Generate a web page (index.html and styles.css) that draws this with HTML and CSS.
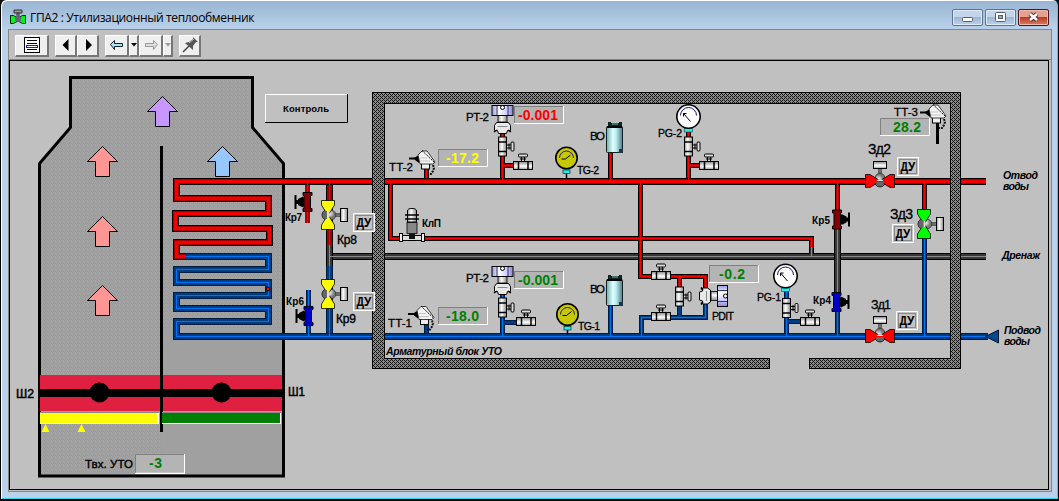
FILE: index.html
```html
<!DOCTYPE html>
<html lang="ru">
<head>
<meta charset="utf-8">
<title>ГПА2 : Утилизационный теплообменник</title>
<link rel="stylesheet" href="styles.css">
</head>
<body>
<div class="window">
  <header class="titlebar">
    <svg class="app-icon" width="16" height="16" viewBox="0 0 16 16">
      <path d="M4 1h8v3H4zM7 4h2v4H7z" fill="#999" stroke="#333"/>
      <path d="M.5 6.500h3L8 9l4.500-2.500h3v8h-3L8 12l-4.500 2.500h-3z" fill="#00f020" stroke="#030"/>
      <circle cx="8" cy="10" r="3" fill="#667"/>
    </svg>
    <span class="title">ГПА2 : Утилизационный теплообменник</span>
    <div class="controls">
      <span class="ctl"><svg width="30" height="16"><rect x="9.500" y="8.500" width="10" height="4" rx="1" fill="#fff" stroke="#55606e"/></svg></span>
      <span class="ctl"><svg width="30" height="16"><rect x="9.500" y="3.500" width="10" height="9" rx="1" fill="#fff" stroke="#55606e"/><rect x="12.500" y="6.500" width="4" height="3" fill="#9ab" stroke="#55606e"/></svg></span>
      <span class="ctl close"><svg width="30" height="16"><path d="M11 5l7 6M18 5l-7 6" stroke="#59303a" stroke-width="4.500"/><path d="M11 5l7 6M18 5l-7 6" stroke="#fff" stroke-width="2.500"/></svg></span>
    </div>
  </header>
  <div class="client">
    <nav class="toolbar">
      <span class="tool menu"><svg width="30" height="18"><rect x="7.500" y="1.500" width="15" height="15" fill="#fff" stroke="#000"/><path d="M10 4.500h10M10 7.500h10M10 13.500h10" stroke="#000"/><rect x="9.500" y="9.500" width="11" height="2" fill="#fff" stroke="#1c1ca0"/></svg></span>
      <span class="tool"><svg width="18" height="18"><path d="M11.500 3v12L5.500 9z"/></svg></span>
      <span class="tool"><svg width="18" height="18"><path d="M7 3v12l6-6z"/></svg></span>
      <span class="tool back"><svg width="20" height="18"><path d="M3.500 8.500l4-4v3h8v3h-8v3z" fill="#a5e4f4" stroke="#123"/></svg></span>
      <span class="tool drop"><svg width="6" height="18"><path d="M0 7h6L3 10.500z"/></svg></span>
      <span class="tool fwd"><svg width="20" height="18"><path d="M16.500 8.500l-4-4v3h-8v3h8v3z" fill="#ddd" stroke="#999"/></svg></span>
      <span class="tool drop last"><svg width="6" height="18"><path d="M0 7h6L3 10.500z" fill="#999"/></svg></span>
      <span class="tool"><svg width="18" height="18"><path d="M2 16l6-6" stroke="#444" stroke-width="1.500"/><path d="M4 7l4-1 4-3V1l5 5h-2l-3 4v4z" fill="#555"/><path d="M8 7l5-4" stroke="#bbb"/></svg></span>
    </nav>
    <main class="mimic">
<svg class="scheme" width="1038" height="428" viewBox="10 61 1038 428">
  <defs>
    <pattern id="wall" width="4" height="4" patternUnits="userSpaceOnUse"><rect width="4" height="4" fill="#8a8a8a"/><path d="M0 0h1v1H0zM2 0h1v1H2zM1 1h1v1H1zM0 2h1v1H0zM2 2h1v1H2zM3 3h1v1H3z" fill="#151515"/></pattern>
    <pattern id="dither" width="4" height="4" patternUnits="userSpaceOnUse"><rect width="4" height="4" fill="#a3a3a3"/><path d="M0 0h1v1H0zM2 1h1v1H2zM1 2h1v2H1zM3 3h1v1H3z" fill="#989898"/></pattern>
    <linearGradient id="metal"><stop offset="0" stop-color="#999"/><stop offset=".4" stop-color="#fff"/><stop offset="1" stop-color="#888"/></linearGradient>
    <linearGradient id="tank"><stop offset="0" stop-color="#7aa"/><stop offset=".4" stop-color="#dff"/><stop offset=".6" stop-color="#bee"/><stop offset="1" stop-color="#578"/></linearGradient>
    <linearGradient id="lilac"><stop offset="0" stop-color="#99d"/><stop offset=".35" stop-color="#fff"/><stop offset=".7" stop-color="#ccf"/><stop offset="1" stop-color="#88c"/></linearGradient>
    <radialGradient id="ball" cx=".35" cy=".35"><stop offset="0" stop-color="#fff"/><stop offset="1" stop-color="#777"/></radialGradient>

    <path id="arrow" d="M0 .5l15 15H7v15H-7v-15h-8z" stroke="#000"/>

    <g id="tap">
      <path d="M4 0h6" stroke="#000" stroke-width="4"/><path d="M4 0h6" stroke="#ccc" stroke-width="2"/>
      <path d="M6.500-3v6" stroke="#000"/>
      <rect x="8.500" y="-4.500" width="3" height="9" rx="1" fill="#ddd" stroke="#000"/>
      <rect x="-4" y="-9.500" width="8" height="19" fill="url(#metal)" stroke="#000"/>
      <path d="M-4-4.500H4M-4 5H4" stroke="#000" stroke-width="1.500"/>
    </g>

    <g id="motor">
      <path d="M5 0h8" stroke="#000" stroke-width="3"/><path d="M5 0h8" stroke="#ddd"/>
      <rect x="12.500" y="-6.500" width="7" height="13" fill="url(#metal)" stroke="#000"/>
      <path d="M0-5.500a6 5.500 0 0 0 0 11z" fill="#777" stroke="#222"/>
      <circle cx="3" cy="0" r="4.800" fill="url(#ball)" stroke="#333" stroke-width=".8"/>
      <path d="M-6.500-14.500h13v4.500L1.500-2v4l5 8v4.500h-13V10l5-8v-4l-5-8z" fill="currentColor" stroke="#000" stroke-width=".8"/>
      <path d="M-1-4a4 4 0 0 0 0 8z" fill="#666"/><path d="M0-3.500a4 4 0 0 1 0 7z" fill="#ddd"/>
    </g>

    <g id="hand">
      <path d="M-11.500-7v14" stroke="#000" stroke-width="2"/>
      <path d="M-11 0h6" stroke="#000" stroke-width="4"/><path d="M-9-3l5-2.500v11l-5-2.500z"/>
      <path d="M-4-9.500h9v3H3.500v13H5v3h-9v-3h1v-13h-1z" fill="currentColor" stroke="#000"/>
      <path d="M-4-4.500v9" stroke="#000" stroke-width="2"/>
    </g>

    <g id="pt">
      <rect x="-4.500" y="10" width="9" height="7" fill="url(#metal)" stroke="#222"/>
      <path d="M-6 17.500H6l2 3v5H5l-1 3h-8l-1-3h-3v-5z" fill="#e8e8e8" stroke="#000"/>
      <path d="M-5 21.500H5" stroke="#888"/><path d="M-8.500 27l3-2M8.500 27l-3-2" stroke="#000" stroke-width="1.500"/>
      <rect x="-10.500" y=".5" width="21" height="10" fill="url(#lilac)" stroke="#000"/>
      <path d="M-5.500 1v9M5.500 1v9" stroke="#336"/><circle cx="0" cy="2.500" r="2" fill="#fff" stroke="#000"/>
    </g>

    <g id="tt">
      <path d="M0 8.500h9" stroke="#000" stroke-width="2"/><path d="M5 8l5-3v8l-4-3z"/>
      <path d="M24 15l1 3-1 3-2 3h-3" fill="none" stroke="#111" stroke-width="2" stroke-dasharray="2 1"/>
      <rect x="12.500" y="13" width="8" height="6" fill="#eee" stroke="#000"/>
      <path d="M9 5l4-4h5l8 11-2 2H11z" fill="#f4f4f4" stroke="#111" stroke-width=".8"/>
      <path d="M13 .5l13 12.500" stroke="#000" stroke-width="1" stroke-dasharray="2 1"/>
      <path d="M11 8h7M11 11h10" stroke="#bbb" stroke-width=".8"/>
    </g>

    <g id="pg">
      <rect x="-4" y="12" width="8" height="3.500" fill="#2ee" stroke="#055" stroke-width=".6"/>
      <circle r="11.700" fill="#fff" stroke="#000" stroke-width="1.600"/>
      <path d="M-8-1a8 8 0 0 1 16 0" fill="none" stroke="#118"/><path d="M2 5l-7-8M-5-3v3M-5-3h3" stroke="#000" fill="none"/>
    </g>
    <g id="tg">
      <path d="M0 13v7" stroke="#000" stroke-width="1.500"/>
      <rect x="-3.500" y="12" width="7" height="3.500" fill="#2ee" stroke="#033" stroke-width=".7"/>
      <circle r="10.700" fill="#c8c800" stroke="#000" stroke-width="1.600"/>
      <path d="M-7 0a7 7 0 0 1 14 0" fill="none" stroke="#226"/><path d="M-5 1h4l5-4" stroke="#000" fill="none"/>
    </g>
    <g id="bo">
      <path d="M2 4V0h3v1h8V0h3v4z" fill="#122"/><path d="M6 2h6" stroke="#7bb"/>
      <rect x=".5" y="4.500" width="16" height="26" rx="1" fill="url(#tank)" stroke="#122"/>
      <path d="M1 5h15" stroke="#000" stroke-width="2"/><rect x="13" y="27" width="4" height="4" fill="#234"/>
    </g>
    <g id="du">
      <rect width="22" height="19" fill="#c4c4c4"/><path d="M.5 19V.5H22" fill="none" stroke="#fff"/><path d="M0 18.500h21.500V0" fill="none" stroke="#fff"/>
      <rect x="2.500" y="2.500" width="17" height="14" fill="none" stroke="#888"/>
      <text x="3.500" y="14" class="du" textLength="15" lengthAdjust="spacingAndGlyphs">ДУ</text>
    </g>
    <g id="box"><rect width="50" height="18" fill="#b4b4b4"/><path d="M.5 18V.5H50" fill="none" stroke="#808080"/><path d="M0 17.500h49.500V0" fill="none" stroke="#fff"/></g>
  </defs>

  <!-- exhaust duct -->
  <path d="M70.500 77.500h182v50l31 36v312.500h-244V163.500l31-36z" fill="url(#dither)" stroke="#000" stroke-width="3"/>
  <path d="M163 330h119v144H163z" fill="#a0a0a0"/>
  <path d="M40 375h120v36H40zM162 375h120v36H162z" fill="#e02040"/>
  <path d="M38 389h246v8H38z"/>
  <path d="M161.500 146v286" stroke="#000" stroke-width="3"/>
  <circle cx="99.500" cy="392.500" r="10"/><circle cx="221.500" cy="392.500" r="10"/>
  <path d="M40 412h119v12H40zM162 412h119v12H162z" fill="#fff"/>
  <path d="M40 412h119v1H40zM162 412h119v1H162z" fill="#888"/>
  <path d="M40 413h117v10H40z" fill="#ff0"/><path d="M162 413h118v10H162z" fill="#008000"/>
  <path d="M45.500 424l4 8h-8zM81.500 424l4 8h-8z" fill="#ff0"/>
  <use href="#arrow" x="162.500" y="96" fill="#c896ff"/>
  <use href="#arrow" x="102.500" y="146" fill="#ff9696"/>
  <use href="#arrow" x="102.500" y="216" fill="#ff9696"/>
  <use href="#arrow" x="102.500" y="285" fill="#ff9696"/>
  <use href="#arrow" x="222.500" y="146" fill="#96c8ff"/>

  <g class="pipes">
    <!-- drain -->
    <g class="gray"><path class="o7" d="M329.500 256.500H986"/><path class="m5" d="M329.500 256.500H986"/><path class="c1" d="M329.500 256.500H986"/></g>
    <!-- thin branches, supply side -->
    <g class="red">
      <path class="o5" d="M390.500 184v54.500h421v9M640.500 184v92.500h65v11M679.500 277v10M502.500 132v48M502.500 165.500h12M688.500 130v50M688.500 165.500h12M610.500 152v28M426.500 169v11M837.500 184v28M924.500 184v27"/>
      <path class="m3" d="M390.500 182v56.500h421v9M640.500 182v94.500h65v11M679.500 277v10M502.500 132v48M502.500 165.500h12M688.500 130v50M688.500 165.500h12M610.500 152v28M426.500 169v11M837.500 184v28M924.500 184v27"/>
      <path class="c1" d="M390.500 182v56.500h421v9M640.500 182v94.500h65v11M679.500 277v10M502.500 132v48M502.500 165.500h12M688.500 130v50M688.500 165.500h12M610.500 152v28M426.500 169v11M837.500 184v28M924.500 184v27"/>
      <path class="b4" d="M307.500 185v38"/><path class="c1" d="M307.500 185v38"/>
    </g>
    <g class="gray"><path class="o5" d="M811.500 247v7"/><path class="m3" d="M811.500 247v9"/><path class="c1" d="M811.500 247v9"/></g>
    <!-- thin branches, return side -->
    <g class="blue">
      <path class="o5" d="M705.500 302v15.500h-64V334M679.500 305v12M502.500 292v44M502.500 322h15M786.500 290v46M786.500 321.500h15M610.500 306v28M426 325v9M837.500 311v23M924.500 238v98M308.500 290v44"/>
      <path class="m3" d="M705.500 302v15.500h-64V334M679.500 305v12M502.500 292v44M502.500 322h15M786.500 290v46M786.500 321.500h15M610.500 306v28M426 325v9M837.500 311v23M924.500 238v98M308.500 290v44"/>
      <path class="c1" d="M705.500 302v15.500h-64V334M502.500 292v44M786.500 290v46M610.500 306v28M837.500 311v23M924.500 238v98M308.500 290v44"/>
    </g>
    <g class="gray"><path class="o7" d="M837.500 228v66"/><path class="m5" d="M837.500 228v66"/><path class="c1" d="M837.500 228v66"/></g>
    <!-- column of valves Кр8 / Кр9 -->
    <g class="red"><path class="o7" d="M329.500 184v61"/><path class="m5" d="M329.500 184v61"/><path class="c1" d="M329.500 184v61"/></g>
    <g class="gray"><path class="o7" d="M329.500 245v21"/><path class="m5" d="M329.500 245v21"/><path class="c1" d="M329.500 245v21M329.500 256.500h6"/></g>
    <g class="blue"><path class="o7" d="M329.500 266v68"/><path class="m5" d="M329.500 266v68"/><path class="c1" d="M329.500 266v68"/></g>
    <!-- mains and coil -->
    <g class="blue">
      <path class="o7" d="M184 256.500h84.500v13h-92v13h92v13h-92v13h92v13h-92v15H988"/>
      <path class="m5" d="M184 256.500h84.500v13h-92v13h92v13h-92v13h92v13h-92v15H988"/>
      <path class="c1" d="M184 256.500h84.500v13h-92v13h92v13h-92v13h92v13h-92v15H988"/>
      <path class="c1" d="M329.500 332v4M308.500 332v4M502.500 332v4M610.500 332v4M641.500 332v4M786.500 332v4M837.500 332v4M924.500 332v4"/>
    </g>
    <g class="red">
      <path class="o7" d="M986 181.500H176.500v17h92v15h-93v15h94v14h-93v14H186"/>
      <path class="m5" d="M986 181.500H176.500v17h92v15h-93v15h94v14h-93v14H186"/>
      <path class="c2" d="M986 181.500H176.500v17h92v15h-93v15h94v14h-93v14H186"/>
      <path class="c1" d="M329.500 181v6M307.500 181v6M390.500 181v6M502.500 176v6M610.500 176v6M640.500 181v6M688.500 176v6M837.500 181v6M924.500 181v6"/>
    </g>
  </g>
  <circle cx="268" cy="289" r="1.800" fill="#f00" stroke="#300"/>
  <path d="M985.500 336.500l13-6.500v13z" fill="#004890" stroke="#012"/>

  <!-- valve block wall -->
  <path class="crisp" d="M372.500 92.500h588v276h-151v-10h140.500v-255.500h-566v255.500h385v10h-396.500z" fill="url(#wall)" stroke="#000"/>

  <use href="#tap" x="502.500" y="146.500"/><use href="#tap" x="688.500" y="146.500"/><use href="#tap" x="502.500" y="307.500"/>
  <use href="#tap" x="679.500" y="296.500"/><use href="#tap" x="786.500" y="308"/>
  <use href="#tap" transform="translate(523 165.500) rotate(-90)"/><use href="#tap" transform="translate(709 165.500) rotate(-90)"/>
  <use href="#tap" transform="translate(526 321.500) rotate(-90)"/><use href="#tap" transform="translate(661 275.500) rotate(-90)"/>
  <use href="#tap" transform="translate(661 316.500) rotate(-90)"/><use href="#tap" transform="translate(810 321.500) rotate(-90)"/>

  <g color="#ff0"><use href="#motor" x="328" y="215"/><use href="#motor" x="328" y="294"/></g>
  <g color="#0f0"><use href="#motor" x="924" y="224"/></g>
  <g color="#f00"><use href="#motor" transform="translate(880 181) rotate(-90)"/><use href="#motor" transform="translate(880 336) rotate(-90)"/></g>

  <g color="#800"><use href="#hand" x="307" y="202"/><use href="#hand" transform="translate(837.500 219.500) scale(-1 1)"/></g>
  <g color="#00c"><use href="#hand" x="308" y="316"/><use href="#hand" transform="translate(837 302) scale(-1 1)"/></g>

  <use href="#pt" x="502.500" y="105"/><use href="#pt" x="502.500" y="266"/><use href="#pt" transform="translate(728 296) rotate(90)"/>
  <use href="#tt" x="409" y="150"/><use href="#tt" x="408" y="305.500"/><use href="#tt" x="920" y="104"/>
  <path d="M937.500 123v21" stroke="#000" stroke-width="3"/>
  <use href="#pg" x="688.500" y="116.500"/><use href="#pg" x="785.500" y="276"/>
  <use href="#tg" x="566.500" y="158"/><use href="#tg" x="567.500" y="314.500"/>
  <use href="#bo" x="606" y="122"/><use href="#bo" x="606" y="275"/>

  <!-- safety valve КлП -->
  <g>
    <rect x="400" y="235.500" width="24" height="5" fill="#ddd" stroke="#000"/>
    <rect x="399.500" y="233.500" width="3" height="8" fill="#eee" stroke="#000"/><rect x="421.500" y="233.500" width="3" height="8" fill="#eee" stroke="#000"/>
    <rect x="407" y="222.500" width="10" height="11" fill="#888" stroke="#222"/><path d="M409 234h6v5h-6z" fill="#111"/>
    <path d="M407.500 222v-11q0-2.500 4.500-2.500t4.500 2.500v11z" fill="url(#metal)" stroke="#000"/>
    <path d="M405 215h14M405 219h14" stroke="#000" stroke-width="1.500"/>
  </g>

  <use href="#du" x="353" y="213"/><use href="#du" x="353" y="292"/><use href="#du" x="897" y="157"/><use href="#du" x="892" y="224"/><use href="#du" x="896" y="311"/>

  <use href="#box" x="514" y="106"/><use href="#box" x="438" y="149"/><use href="#box" x="514" y="271"/><use href="#box" x="438" y="307"/>
  <use href="#box" x="709" y="265"/><use href="#box" x="880" y="118"/><use href="#box" transform="translate(135 454) scale(1 1.110)"/>
  <g class="val">
    <text x="518" y="120" fill="#f00" textLength="40">-0.001</text>
    <text x="446" y="163" fill="#ff0" textLength="33">-17.2</text>
    <text x="518" y="285" textLength="40">-0.001</text>
    <text x="446" y="321" textLength="33">-18.0</text>
    <text x="719" y="279" textLength="26">-0.2</text>
    <text x="893" y="132" textLength="28">28.2</text>
    <text x="149" y="468" textLength="13">-3</text>
  </g>

  <!-- button -->
  <path d="M265.500 123V94.500H347" fill="none" stroke="#fff"/><path d="M265 122.500h82.500V94" fill="none" stroke="#000"/>
  <text class="btn" x="283" y="112" textLength="46">Контроль</text>

  <g class="lbl">
    <text x="466" y="121" textLength="23">PT-2</text>
    <text x="389" y="171" textLength="24">TT-2</text>
    <text x="466" y="282" textLength="23">PT-2</text>
    <text x="388" y="327" textLength="24">TT-1</text>
    <text x="894" y="116" textLength="24">TT-3</text>
    <text x="590" y="140" textLength="15">BO</text>
    <text x="590" y="293" textLength="15">BO</text>
    <g class="tight">
      <text x="577" y="174" textLength="22">TG-2</text>
      <text x="578" y="330" textLength="22">TG-1</text>
      <text x="658" y="137" textLength="24">PG-2</text>
      <text x="757" y="301" textLength="24">PG-1</text>
      <text x="712" y="320" textLength="22">PDIT</text>
    </g>
  </g>
  <g class="kr">
    <text x="285" y="221" textLength="17">Кр7</text>
    <text x="286" y="305" textLength="18">Кр6</text>
    <text x="812" y="224" textLength="18">Кр5</text>
    <text x="813" y="304" textLength="18">Кр4</text>
    <text x="422" y="227" textLength="19">КлП</text>
    <g class="big"><text x="337" y="244" textLength="20">Кр8</text><text x="336" y="323" textLength="20">Кр9</text></g>
  </g>
  <g class="zd">
    <text x="868" y="154" textLength="23">Зд2</text>
    <text x="890" y="219" textLength="23">Зд3</text>
    <text x="871" y="309" class="sm" textLength="20">Зд1</text>
    <text x="16" y="398" class="sh" textLength="18" lengthAdjust="spacingAndGlyphs">Ш2</text>
    <text x="288" y="396" class="sh" textLength="17" lengthAdjust="spacingAndGlyphs">Ш1</text>
    <text x="85" y="468" class="tv" textLength="48">Твх. УТО</text>
  </g>
  <g class="note">
    <text x="1003" y="179" textLength="35">Отвод</text><text x="1003" y="190" textLength="26">воды</text>
    <text x="1002" y="259" textLength="38">Дренаж</text>
    <text x="1004" y="334" textLength="37">Подвод</text><text x="1004" y="345" textLength="26">воды</text>
    <text x="386" y="355" textLength="116">Арматурный блок УТО</text>
  </g>
</svg>
    </main>
  </div>
</div>
</body>
</html>
```
FILE: styles.css
```css
* { box-sizing: border-box; }
body { margin: 0; background: #101010; font-family: "Liberation Sans", Arial, sans-serif; }
.window {
  width: 1059px; height: 501px;
  padding: 0 5px 7px 6px;
  background: linear-gradient(#98b4d2, #b9d1ea 29px);
  border: solid #000; border-width: 0 1px 2px 1px;
  border-radius: 6px 6px 0 0;
  box-shadow: inset 1px 1px 0 #fff, inset -1px -1px 0 #2cd6ee;
}
.titlebar { height: 29px; display: flex; align-items: center; padding: 5px 2px 0 3px; }
.app-icon { flex: none; }
.title { font: 12px "Open Sans", "Noto Sans", sans-serif; margin-left: 4px; letter-spacing: -0.36px; white-space: nowrap; color: #000; }
.controls { margin-left: auto; display: flex; gap: 2px; }
.ctl { width: 31px; height: 17px; border: 1px solid #5c7493; border-radius: 2px; box-shadow: inset 0 0 0 1px #dfeaf6; background: linear-gradient(#c3d5ea 48%, #9cb6d3 50%, #bcd2ea); display: flex; }
.ctl svg { display: block; margin: -1px 0 0; }
.controls { margin-right: 2px; }
.close { border-color: #50141c; background: linear-gradient(#e5a090 45%, #bd3a20 50%, #d88065); box-shadow: inset 0 0 0 1px #eebbae; }
.client { margin-left: 1px; width: 1044px; height: 463px; border: 1px solid #868686; background: #c0c0c0; }
.toolbar { height: 30px; display: flex; align-items: center; padding: 2px 6px 0; border-bottom: 1px solid #868686; }
.tool { width: 22px; height: 22px; display: flex; align-items: center; justify-content: center; background: #efefef; border: solid; border-width: 1px 2px 2px 1px; border-color: #fff #777 #777 #fff; }
.tool svg { flex: none; }
.menu { width: 34px; margin-right: 6px; }
.tool.back { width: 24px; margin-left: 6px; }
.tool.fwd { width: 24px; }
.tool.drop { width: 10px; }
.tool.last { margin-right: 6px; }
.mimic { width: 1040px; height: 430px; border: 1px solid #000; background: #c0c0c0; }
.scheme { display: block; }
.crisp, .pipes { shape-rendering: crispEdges; }
.pipes path { fill: none; }
.o7 { stroke-width: 7px; }
.m5, .o5, .b4 { stroke-width: 5px; }
.m3, .c2 { stroke-width: 3px; }
.c1 { stroke-width: 1px; }
.o7, .o5 { stroke: #000; }
.b4 { stroke: #b00000; }
.red .m5 { stroke: #a00000; }
.red .m3 { stroke: #c00000; }
.red .c1, .red .c2 { stroke: #ff0000; }
.red .c2 { stroke: #f00000; }
.blue .o7, .blue .o5 { stroke: #001c40; }
.blue .m5, .blue .m3 { stroke: #003c82; }
.blue .c1 { stroke: #0074f4; }
.gray .m5, .gray .m3 { stroke: #383838; }
.gray .c1 { stroke: #8c8c8c; }
.du { font: bold 13px "Liberation Mono", monospace; }
.val { font: bold 14px "Liberation Sans", sans-serif; fill: #008000; }
.btn { font: bold 9.500px "Liberation Sans", sans-serif; }
.lbl { font: 11.500px "Liberation Sans", sans-serif; stroke: #000; stroke-width: 0.3px; }
.tight { font-size: 10.500px; }
.kr { font: bold 10px "Liberation Sans", sans-serif; }
.kr .big { font-size: 12px; font-weight: normal; stroke: #000; stroke-width: 0.4px; }
.zd { font: 14px "Liberation Sans", sans-serif; stroke: #000; stroke-width: 0.3px; }
.zd .sm { font-size: 12.500px; }
.zd .sh { font-size: 13px; stroke-width: 0.5px; }
.zd .tv { font-size: 11.500px; stroke-width: 0.4px; }
.note { font: italic bold 10.500px "Liberation Sans", sans-serif; }
```
